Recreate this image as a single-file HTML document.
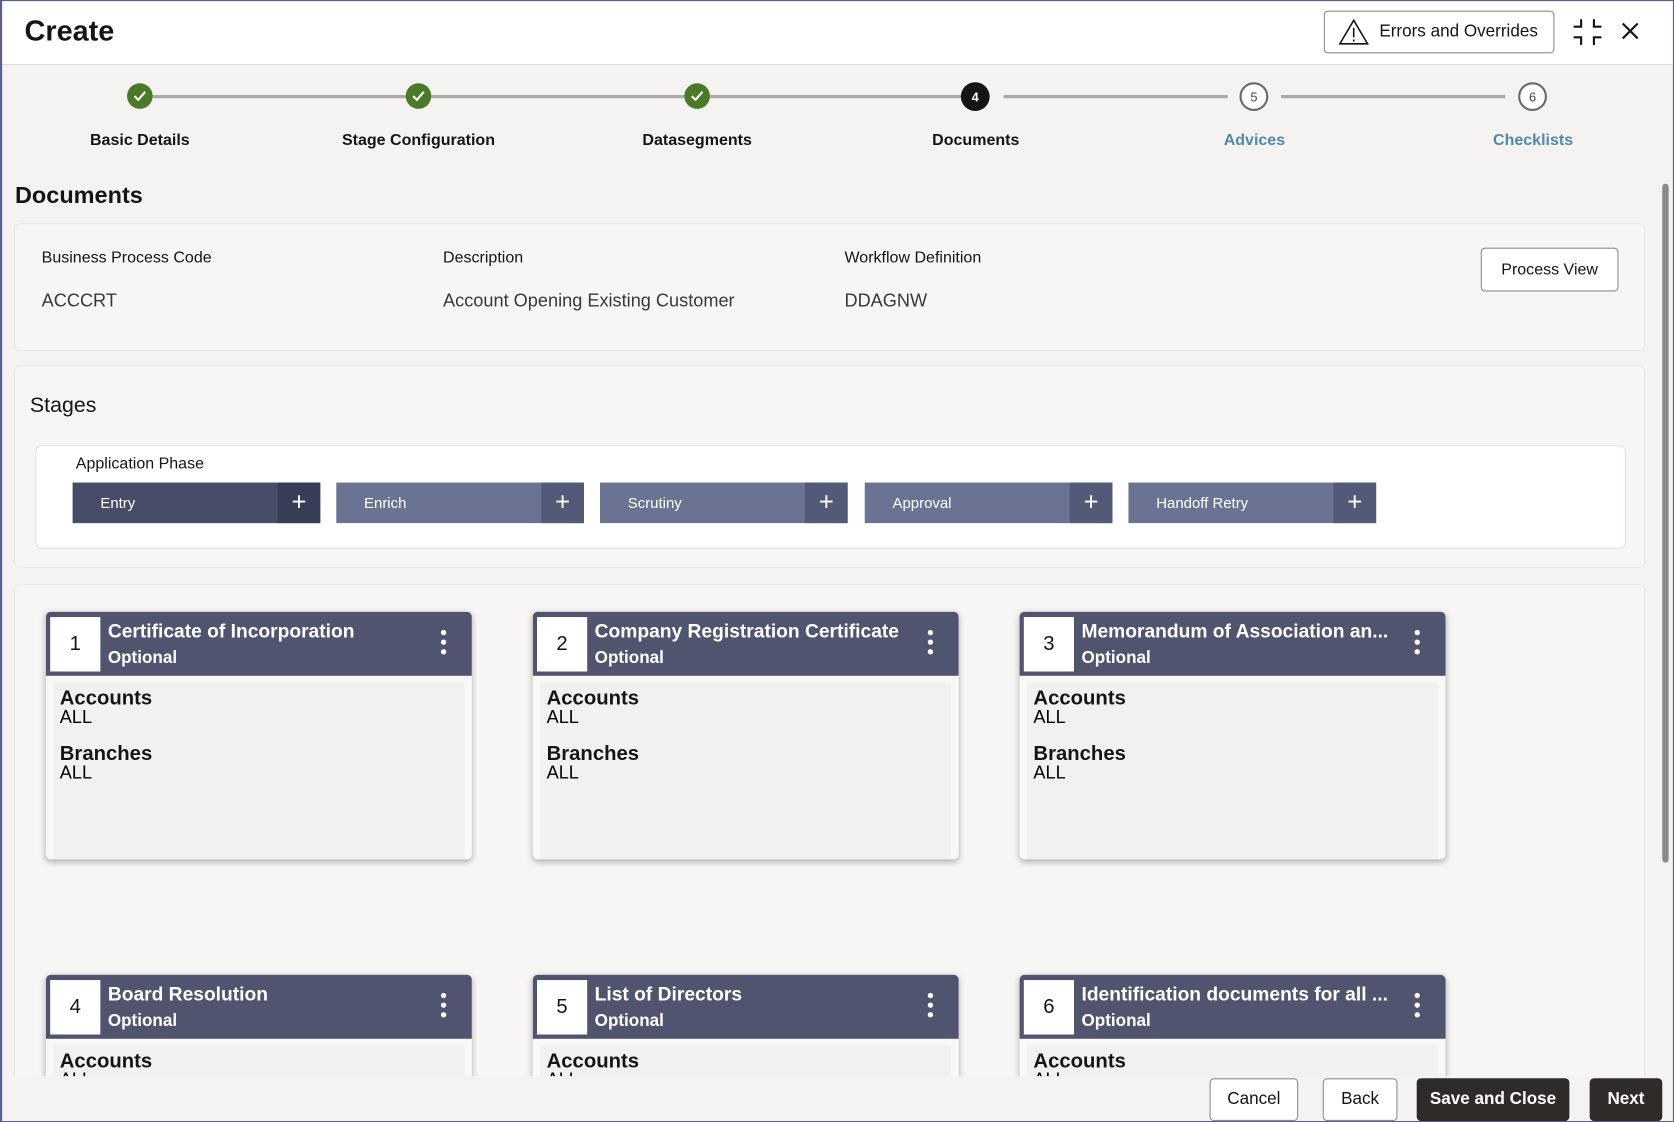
<!DOCTYPE html>
<html><head><meta charset="utf-8"><style>
*{box-sizing:border-box;margin:0;padding:0}
html,body{width:1674px;height:1122px;overflow:hidden;background:#f4f3f1;font-family:"Liberation Sans",sans-serif;color:#161513;position:relative}
#w{position:absolute;left:0;top:0;width:1568px;height:1051px;transform:scale(1.0676);transform-origin:0 0;background:#f4f3f1;overflow:hidden}
#fr{position:absolute;left:0;top:0;width:1568px;height:1051px;box-shadow:inset 2px 1px 0 #5b6088,inset -1px -1px 0 #5b6088;pointer-events:none;z-index:9}
.a{position:absolute}
.hdr{left:0;top:0;width:1568px;height:61px;background:#fff;border-bottom:1px solid #ddd}
.step{width:24px;height:24px;border-radius:50%;top:78px;display:flex;align-items:center;justify-content:center;font-size:12px}
.ok{background:#4a7a28}
.lbl{top:123px;width:240px;text-align:center;font-size:15px;font-weight:bold}
.line{top:89px;height:3px;background:#a9a9a9}
.panel{left:13px;width:1528px;background:#f7f6f4;border:1px solid #e9e8e6;border-radius:6px}
.k{font-size:15px;color:#161513}
.v{font-size:17px;color:#3a3937}
.btn{border:1px solid #8c8b89;border-radius:4px;background:#fff;font-size:15px;display:flex;align-items:center;justify-content:center}
.sb{top:452px;height:38px;width:232px;color:#fff;font-size:14px}
.sb span{position:absolute;left:26px;top:11px}
.sb i{position:absolute;right:0;top:0;width:40px;height:38px;font-style:normal;font-size:24px;display:flex;align-items:center;justify-content:center;font-weight:300}
.card{width:399px;height:232px;background:#f9f8f7;border-radius:5px;box-shadow:0 2px 6px rgba(0,0,0,.3);overflow:hidden}
.ch{position:absolute;left:0;top:0;width:100%;height:60px;background:#50546f;color:#fff}
.num{position:absolute;left:4px;top:5px;width:47px;height:51px;background:#fff;color:#161513;font-size:19px;display:flex;align-items:center;justify-content:center}
.t1{position:absolute;left:58px;top:8px;font-size:18px;font-weight:bold;white-space:nowrap}
.t2{position:absolute;left:58px;top:35px;font-size:16px;font-weight:bold}
.dots{position:absolute;right:24px;top:17px;width:5px}
.dots b{display:block;width:5px;height:5px;border-radius:50%;background:#fff;margin-bottom:4px}
.cb{position:absolute;left:7px;top:66px;right:7px;bottom:0;background:#f1f1f1;padding:6px 6px}
.cb h4{font-size:19px;line-height:19px;font-weight:bold}
.cb p{font-size:17px;line-height:15px;margin-bottom:18px;color:#000}
.fb{top:1010px;height:40px;font-size:16px}
.dk{background:#2f2b28;color:#fff;border-color:#2f2b28;font-weight:bold}
</style></head><body><div id="w">
<div class="a hdr"></div>
<div class="a" style="left:23px;top:14px;font-size:27px;font-weight:bold">Create</div>
<div class="a btn" style="left:1240px;top:10px;width:216px;height:40px;justify-content:flex-start;padding-left:12px;font-size:16px">
<svg width="30" height="26" viewBox="0 0 30 26"><path d="M15 2 L28 24 H2 Z" fill="none" stroke="#161513" stroke-width="1.5"/><path d="M15 9v9M15 20v2" stroke="#161513" stroke-width="1.5"/></svg><span style="margin-left:9px">Errors and Overrides</span></div>
<svg class="a" style="left:1473px;top:17px" width="28" height="26" viewBox="0 0 28 26"><path d="M8 1v7H1M20 1v7h7M8 25v-7H1M20 25v-7h7" fill="none" stroke="#161513" stroke-width="2"/></svg>
<svg class="a" style="left:1518px;top:20px" width="18" height="18" viewBox="0 0 18 18"><path d="M2 2L16 16M16 2L2 16" stroke="#161513" stroke-width="2"/></svg>

<div class="a line" style="left:143px;width:237px"></div>
<div class="a line" style="left:404px;width:237px"></div>
<div class="a line" style="left:665px;width:237px"></div>
<div class="a line" style="left:940px;width:210px"></div>
<div class="a line" style="left:1200px;width:210px"></div>
<div class="a step ok" style="left:119px"><svg width="14" height="12"><path d="M2 6l3.5 3.5L12 2" fill="none" stroke="#fff" stroke-width="2"/></svg></div>
<div class="a step ok" style="left:380px"><svg width="14" height="12"><path d="M2 6l3.5 3.5L12 2" fill="none" stroke="#fff" stroke-width="2"/></svg></div>
<div class="a step ok" style="left:641px"><svg width="14" height="12"><path d="M2 6l3.5 3.5L12 2" fill="none" stroke="#fff" stroke-width="2"/></svg></div>
<div class="a step" style="left:900px;top:77px;width:27px;height:27px;background:#161513;color:#fff;font-weight:bold">4</div>
<div class="a step" style="left:1161px;top:77px;width:27px;height:27px;border:2px solid #6a6a6a;background:#fff;color:#444">5</div>
<div class="a step" style="left:1422px;top:77px;width:27px;height:27px;border:2px solid #6a6a6a;background:#fff;color:#444">6</div>
<div class="a lbl" style="left:11px">Basic Details</div>
<div class="a lbl" style="left:272px">Stage Configuration</div>
<div class="a lbl" style="left:533px">Datasegments</div>
<div class="a lbl" style="left:794px">Documents</div>
<div class="a lbl" style="left:1055px;color:#4f8aa6">Advices</div>
<div class="a lbl" style="left:1316px;color:#4f8aa6">Checklists</div>

<div class="a" style="left:14px;top:170px;font-size:22px;font-weight:bold">Documents</div>
<div class="a panel" style="top:209px;height:120px"></div>
<div class="a k" style="left:39px;top:233px">Business Process Code</div>
<div class="a k" style="left:415px;top:233px">Description</div>
<div class="a k" style="left:791px;top:233px">Workflow Definition</div>
<div class="a v" style="left:39px;top:272px">ACCCRT</div>
<div class="a v" style="left:415px;top:272px">Account Opening Existing Customer</div>
<div class="a v" style="left:791px;top:272px">DDAGNW</div>
<div class="a btn" style="left:1387px;top:232px;width:129px;height:41px">Process View</div>

<div class="a panel" style="top:342px;height:190px"></div>
<div class="a" style="left:28px;top:369px;font-size:20px">Stages</div>
<div class="a" style="left:33px;top:417px;width:1490px;height:97px;background:#fff;border:1px solid #e2e1df;border-radius:6px"></div>
<div class="a" style="left:71px;top:426px;font-size:15px">Application Phase</div>
<div class="a sb" style="left:68px;background:#474c69"><span>Entry</span><i style="background:#383d57">+</i></div>
<div class="a sb" style="left:315px;background:#6b7392"><span>Enrich</span><i style="background:#535a77">+</i></div>
<div class="a sb" style="left:562px;background:#6b7392"><span>Scrutiny</span><i style="background:#535a77">+</i></div>
<div class="a sb" style="left:810px;background:#6b7392"><span>Approval</span><i style="background:#535a77">+</i></div>
<div class="a sb" style="left:1057px;background:#6b7392"><span>Handoff Retry</span><i style="background:#535a77">+</i></div>

<div class="a panel" style="top:547px;height:470px;overflow:hidden">
<div class="a card" style="left:29px;top:25px"><div class="ch"><div class="num">1</div><div class="t1">Certificate of Incorporation</div><div class="t2">Optional</div><div class="dots"><b></b><b></b><b></b></div></div><div class="cb"><h4>Accounts</h4><p>ALL</p><h4>Branches</h4><p>ALL</p></div></div>
<div class="a card" style="left:485px;top:25px"><div class="ch"><div class="num">2</div><div class="t1">Company Registration Certificate</div><div class="t2">Optional</div><div class="dots"><b></b><b></b><b></b></div></div><div class="cb"><h4>Accounts</h4><p>ALL</p><h4>Branches</h4><p>ALL</p></div></div>
<div class="a card" style="left:941px;top:25px"><div class="ch"><div class="num">3</div><div class="t1">Memorandum of Association an...</div><div class="t2">Optional</div><div class="dots"><b></b><b></b><b></b></div></div><div class="cb"><h4>Accounts</h4><p>ALL</p><h4>Branches</h4><p>ALL</p></div></div>
<div class="a card" style="left:29px;top:365px"><div class="ch"><div class="num">4</div><div class="t1">Board Resolution</div><div class="t2">Optional</div><div class="dots"><b></b><b></b><b></b></div></div><div class="cb"><h4>Accounts</h4><p>ALL</p></div></div>
<div class="a card" style="left:485px;top:365px"><div class="ch"><div class="num">5</div><div class="t1">List of Directors</div><div class="t2">Optional</div><div class="dots"><b></b><b></b><b></b></div></div><div class="cb"><h4>Accounts</h4><p>ALL</p></div></div>
<div class="a card" style="left:941px;top:365px"><div class="ch"><div class="num">6</div><div class="t1">Identification documents for all ...</div><div class="t2">Optional</div><div class="dots"><b></b><b></b><b></b></div></div><div class="cb"><h4>Accounts</h4><p>ALL</p></div></div>
</div>
<div class="a" style="left:0;top:1008px;width:1568px;height:43px;background:#f4f3f1"></div>
<div class="a" style="left:1556px;top:160px;width:8px;height:840px"><div style="position:absolute;left:1px;top:12px;width:6px;height:636px;background:#8a8a8a;border-radius:3px"></div></div>
<div class="a btn fb" style="left:1133px;width:83px">Cancel</div>
<div class="a btn fb" style="left:1239px;width:70px">Back</div>
<div class="a btn fb dk" style="left:1327px;width:143px">Save and Close</div>
<div class="a btn fb dk" style="left:1489px;width:68px">Next</div>
<div id="fr"></div>
</div></body></html>
